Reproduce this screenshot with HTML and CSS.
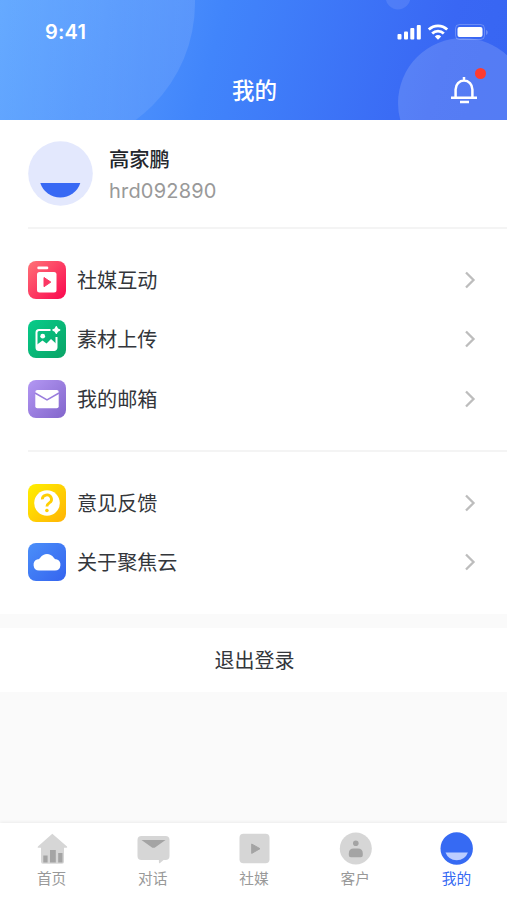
FILE: index.html
```html
<!DOCTYPE html>
<html lang="zh-CN">
<head>
    <meta charset="UTF-8">
    <meta name="viewport" content="width=device-width, initial-scale=1.0">
    <title>我的</title>
    <link rel="stylesheet" href="styles.css">
</head>
<body>
    <header class="header">
        <svg class="header-bg" width="507" height="120" viewBox="0 0 507 120">
            <defs>
                <linearGradient id="bubble" x1="0" y1="0" x2="1" y2="0">
                    <stop offset="0.3" stop-color="#fff" stop-opacity="0.02"/>
                    <stop offset="1" stop-color="#fff" stop-opacity="0.11"/>
                </linearGradient>
            </defs>
            <circle cx="50" cy="3" r="145" fill="url(#bubble)"/>
            <circle cx="398" cy="-3" r="12.5" fill="#fff" fill-opacity="0.1"/>
            <circle cx="463" cy="103" r="65" fill="#fff" fill-opacity="0.15"/>
        </svg>
        <div class="status-bar">
            <span class="time">9:41</span>
            <svg width="92" height="18" viewBox="0 0 92 18" fill="#fff">
                <rect x="0.5" y="11" width="4" height="5.5" rx="1"/>
                <rect x="7" y="8.5" width="4" height="8" rx="1"/>
                <rect x="13.3" y="5" width="4" height="11.5" rx="1"/>
                <rect x="19.8" y="2" width="4" height="14.5" rx="1"/>
                <g fill="none" stroke="#fff" stroke-width="2.8">
                    <path d="M31.8 6.6a13.2 13.2 0 0 1 18.4 0"/>
                    <path d="M35.2 10.5a8.3 8.3 0 0 1 11.6 0"/>
                </g>
                <path d="M41 16.8l-3.2-3.4a4.8 4.8 0 0 1 6.4 0z"/>
                <rect x="58.5" y="1.5" width="29" height="15" rx="4" fill="none" stroke="#fff" stroke-opacity="0.25"/>
                <rect x="60.5" y="4" width="25" height="10" rx="2"/>
                <path d="M89 7v5c2.4-.9 2.4-4.1 0-5z" fill-opacity="0.25"/>
            </svg>
        </div>
        <div class="nav-bar">
            <h1>我的</h1>
            <button type="button" class="bell" title="消息">
                <svg width="28" height="28" viewBox="0 0 28 28" fill="none" stroke="#fff" stroke-width="2.5">
                    <path d="M1 21.7h26M5.6 21.7v-8.3a8.4 8.8 0 0 1 16.8 0v8.3M14 1v3.5M10 26h9"/>
                </svg>
                <span class="badge"></span>
            </button>
        </div>
    </header>

    <main>
        <section class="card">
            <div class="profile">
                <svg width="65" height="65" viewBox="0 0 65 65">
                    <circle cx="32.5" cy="32.5" r="32.3" fill="#e3e8fd"/>
                    <path d="M12.3 42h40a21 21 0 0 1-40 0z" fill="#3869f4"/>
                </svg>
                <div class="profile-text">
                    <div class="name">高家鹏</div>
                    <div class="account">hrd092890</div>
                </div>
            </div>

            <ul class="menu">
                <li>
                    <svg class="menu-icon" viewBox="0 0 38 38">
                        <defs><linearGradient id="red" x1="0" y1="0" x2="1" y2="1"><stop stop-color="#ff7377"/><stop offset="1" stop-color="#fa064e"/></linearGradient></defs>
                        <rect width="38" height="38" rx="8" fill="url(#red)"/>
                        <rect x="9.3" y="5.6" width="11" height="2.6" rx="1.2" fill="#fff"/>
                        <rect x="9" y="11" width="19.5" height="20.5" rx="2.5" fill="#fff"/>
                        <path d="M16 16.5v9.2l6.8-4.6z" fill="#fb3763" stroke="#fb3763" stroke-linejoin="round"/>
                    </svg>
                    <span>社媒互动</span>
                    <svg class="arrow" viewBox="0 0 12 18"><path d="M2 1.5L9.5 9 2 16.5"/></svg>
                </li>
                <li>
                    <svg class="menu-icon" viewBox="0 0 38 38">
                        <defs><linearGradient id="green" x1="0" y1="0" x2="1" y2="1"><stop stop-color="#07cc8a"/><stop offset="1" stop-color="#0aa366"/></linearGradient></defs>
                        <rect width="38" height="38" rx="8" fill="url(#green)"/>
                        <path d="M22.5 10H11a2.5 2.5 0 0 0-2.5 2.5v15A2.5 2.5 0 0 0 11 30h15a2.5 2.5 0 0 0 2.5-2.5V17" fill="none" stroke="#fff" stroke-width="2"/>
                        <path d="M8.5 25l6-4.5 4 3 4.5-4.5 5.5 5v5l-2 1.5h-16l-2-2z" fill="#fff"/>
                        <circle cx="14.7" cy="16.2" r="2.4" fill="#fff"/>
                        <path d="M28.3 6.6c.5 2.3 1.2 2.9 3.4 3.4-2.2.5-2.9 1.2-3.4 3.4-.5-2.2-1.2-2.9-3.4-3.4 2.2-.5 2.9-1.1 3.4-3.4z" fill="#fff" stroke="#fff" stroke-width="1.4" stroke-linejoin="round"/>
                    </svg>
                    <span>素材上传</span>
                    <svg class="arrow" viewBox="0 0 12 18"><path d="M2 1.5L9.5 9 2 16.5"/></svg>
                </li>
                <li>
                    <svg class="menu-icon" viewBox="0 0 38 38">
                        <defs><linearGradient id="purple" x1="0" y1="0" x2="1" y2="1"><stop stop-color="#b397f3"/><stop offset="1" stop-color="#8265cb"/></linearGradient></defs>
                        <rect width="38" height="38" rx="8" fill="url(#purple)"/>
                        <rect x="7.3" y="10" width="23.4" height="18.3" rx="2" fill="#fff"/>
                        <path d="M7 13l12 7 12-7" fill="none" stroke="#9a7ddd" stroke-width="1.5"/>
                    </svg>
                    <span>我的邮箱</span>
                    <svg class="arrow" viewBox="0 0 12 18"><path d="M2 1.5L9.5 9 2 16.5"/></svg>
                </li>
            </ul>

            <ul class="menu menu-last">
                <li>
                    <svg class="menu-icon" viewBox="0 0 38 38">
                        <defs><linearGradient id="yellow" x1="0" y1="0" x2="1" y2="1"><stop stop-color="#fff000"/><stop offset="1" stop-color="#ffb306"/></linearGradient></defs>
                        <rect width="38" height="38" rx="8" fill="url(#yellow)"/>
                        <circle cx="19" cy="19" r="12.8" fill="#fff"/>
                        <path d="M14.3 15.4a4.6 4.3 0 1 1 7 3.5c-1.6 1.1-2.4 1.7-2.4 3.6" fill="none" stroke="#ffcf03" stroke-width="2.8"/>
                        <circle cx="18.9" cy="26.5" r="1.8" fill="#ffcf03"/>
                    </svg>
                    <span>意见反馈</span>
                    <svg class="arrow" viewBox="0 0 12 18"><path d="M2 1.5L9.5 9 2 16.5"/></svg>
                </li>
                <li>
                    <svg class="menu-icon" viewBox="0 0 38 38">
                        <defs><linearGradient id="blue" x1="0" y1="0" x2="1" y2="1"><stop stop-color="#4b8ff9"/><stop offset="1" stop-color="#3564ef"/></linearGradient></defs>
                        <rect width="38" height="38" rx="8" fill="url(#blue)"/>
                        <path d="M11 27.5a5.7 5.7 0 0 1-1.2-11.2c1.2-.3 1.8-.8 2.6-1.9a8.2 8.2 0 0 1 13.2 0c.8 1.1 1.4 1.6 2.6 1.9a5.7 5.7 0 0 1-1.2 11.2z" fill="#fff"/>
                    </svg>
                    <span>关于聚焦云</span>
                    <svg class="arrow" viewBox="0 0 12 18"><path d="M2 1.5L9.5 9 2 16.5"/></svg>
                </li>
            </ul>
        </section>

        <button type="button" class="logout">退出登录</button>
    </main>

    <nav class="tab-bar">
        <a class="tab">
            <svg viewBox="0 0 34 34">
                <path d="M17.3 1.7L32 14.5q.8 1.2-.6 1.2H29v14.1q0 2-2 2H8q-2 0-2-2V15.7H3.3q-1.2 0-.4-1.2z" fill="#d6d6d6"/>
                <path d="M8.3 23.5h4.3v7H8.3zM15 18h5.8v12.5H15zM23.2 21h4.3v9.5h-4.3z" fill="#a4a4a4"/>
            </svg>
            <span>首页</span>
        </a>
        <a class="tab">
            <svg viewBox="0 0 34 34">
                <path d="M5.5 4h24q4 0 4 4v16q0 4-4 4h-2l-3.4 3q-1.2.7-1.2-.8V28H5.5q-4 0-4-4V8q0-4 4-4z" fill="#d6d6d6"/>
                <path d="M5.5 8h24l-9.8 7q-2.2 1.7-4.4 0z" fill="#a4a4a4"/>
            </svg>
            <span>对话</span>
        </a>
        <a class="tab">
            <svg viewBox="0 0 34 34">
                <rect x="2.5" y="1.7" width="30" height="29.5" rx="4" fill="#d6d6d6"/>
                <path d="M14.7 12v9.4l8.3-4.7z" fill="#a4a4a4" stroke="#a4a4a4" stroke-linejoin="round"/>
            </svg>
            <span>社媒</span>
        </a>
        <a class="tab">
            <svg viewBox="0 0 34 34">
                <circle cx="17.8" cy="16.5" r="16" fill="#d6d6d6"/>
                <circle cx="17.8" cy="11.3" r="2.8" fill="#a4a4a4"/>
                <path d="M10.8 21.5q0-5 5-5h4q5 0 5 5v1.8q0 2-2 2h-10q-2 0-2-2z" fill="#a4a4a4"/>
            </svg>
            <span>客户</span>
        </a>
        <a class="tab active">
            <svg viewBox="0 0 34 34">
                <circle cx="17.7" cy="16.5" r="16.2" fill="#366af3"/>
                <path d="M6.5 20.6h22.4a12 12 0 0 1-22.4 0z" fill="#bccdff"/>
            </svg>
            <span>我的</span>
        </a>
    </nav>
</body>
</html>
```
FILE: styles.css
```css
* {
    box-sizing: border-box;
}

body {
    margin: 0;
    height: 900px;
    display: flex;
    flex-direction: column;
    overflow: hidden;
    background: #fafafa;
    color: #33363b;
    font-family: Inter, 'Noto Sans CJK SC', sans-serif;
}

svg {
    display: block;
    flex-shrink: 0;
}

button {
    border: none;
    padding: 0;
    font-family: inherit;
    color: inherit;
}

.header {
    position: relative;
    height: 119.5px;
    overflow: hidden;
    background: linear-gradient(105deg, #62a8ff 0%, #4185fb 42%, #3967f4 85%, #3765f2 100%);
    color: white;
}

.header-bg {
    position: absolute;
    top: 0;
    left: 0;
}

.status-bar {
    position: relative;
    display: flex;
    justify-content: space-between;
    align-items: center;
    height: 64px;
    padding: 0 18px 0 45px;
}

.time {
    font-size: 20px;
    font-weight: 600;
    letter-spacing: 0.2px;
}

.nav-bar {
    position: relative;
    display: grid;
    grid-template-columns: 1fr auto 1fr;
    align-items: center;
    height: 52px;
    padding: 0 29px;
}

.nav-bar h1 {
    grid-column: 2;
    margin: 0;
    padding: 2px 0 0 2px;
    font-size: 22.5px;
    font-weight: 500;
    line-height: 32px;
}

.bell {
    position: relative;
    justify-self: end;
    background: none;
}

.badge {
    position: absolute;
    top: -8px;
    right: -8px;
    width: 11px;
    height: 11px;
    border-radius: 50%;
    background: #ff3b2f;
}

.card {
    height: 494.5px;
    padding-left: 28px;
    background: white;
}

.profile {
    display: flex;
    align-items: center;
    gap: 16px;
    height: 109.5px;
    border-bottom: 2px solid #f4f4f4;
}

.profile-text {
    padding-top: 4px;
}

.name {
    color: #24272d;
    font-size: 20.3px;
    font-weight: 500;
    line-height: 32px;
}

.account {
    color: #999;
    font-size: 20px;
    line-height: 31px;
    letter-spacing: 0.2px;
}

.menu {
    display: flex;
    flex-direction: column;
    gap: 21.2px;
    margin: 0;
    padding: 32.2px 31.5px 32.2px 0;
    list-style: none;
    border-bottom: 2px solid #f4f4f4;
}

.menu-last {
    border-bottom: none;
}

.menu li {
    display: flex;
    align-items: center;
    height: 38px;
    font-size: 20.1px;
}

.menu li span {
    padding-bottom: 1px;
}

.menu-icon {
    width: 38px;
    height: 38px;
    margin-right: 11px;
}

.arrow {
    width: 12px;
    height: 18px;
    margin-left: auto;
    fill: none;
    stroke: #bdbdbd;
    stroke-width: 2.3;
}

.logout {
    display: block;
    width: 100%;
    height: 64px;
    margin-top: 14px;
    padding: 0 0 1px 2px;
    background: white;
    font-size: 20px;
}

.tab-bar {
    display: flex;
    height: 77px;
    margin-top: auto;
    padding: 9px 0 0 1px;
    background: white;
    box-shadow: 0 -1px 3px rgba(0, 0, 0, 0.06);
}

.tab {
    flex: 1;
    display: flex;
    flex-direction: column;
    align-items: center;
    gap: 2px;
    color: #999;
    font-size: 14.7px;
    line-height: 22px;
}

.tab svg {
    width: 34px;
    height: 34px;
}

.tab.active {
    color: #366af3;
}
```
